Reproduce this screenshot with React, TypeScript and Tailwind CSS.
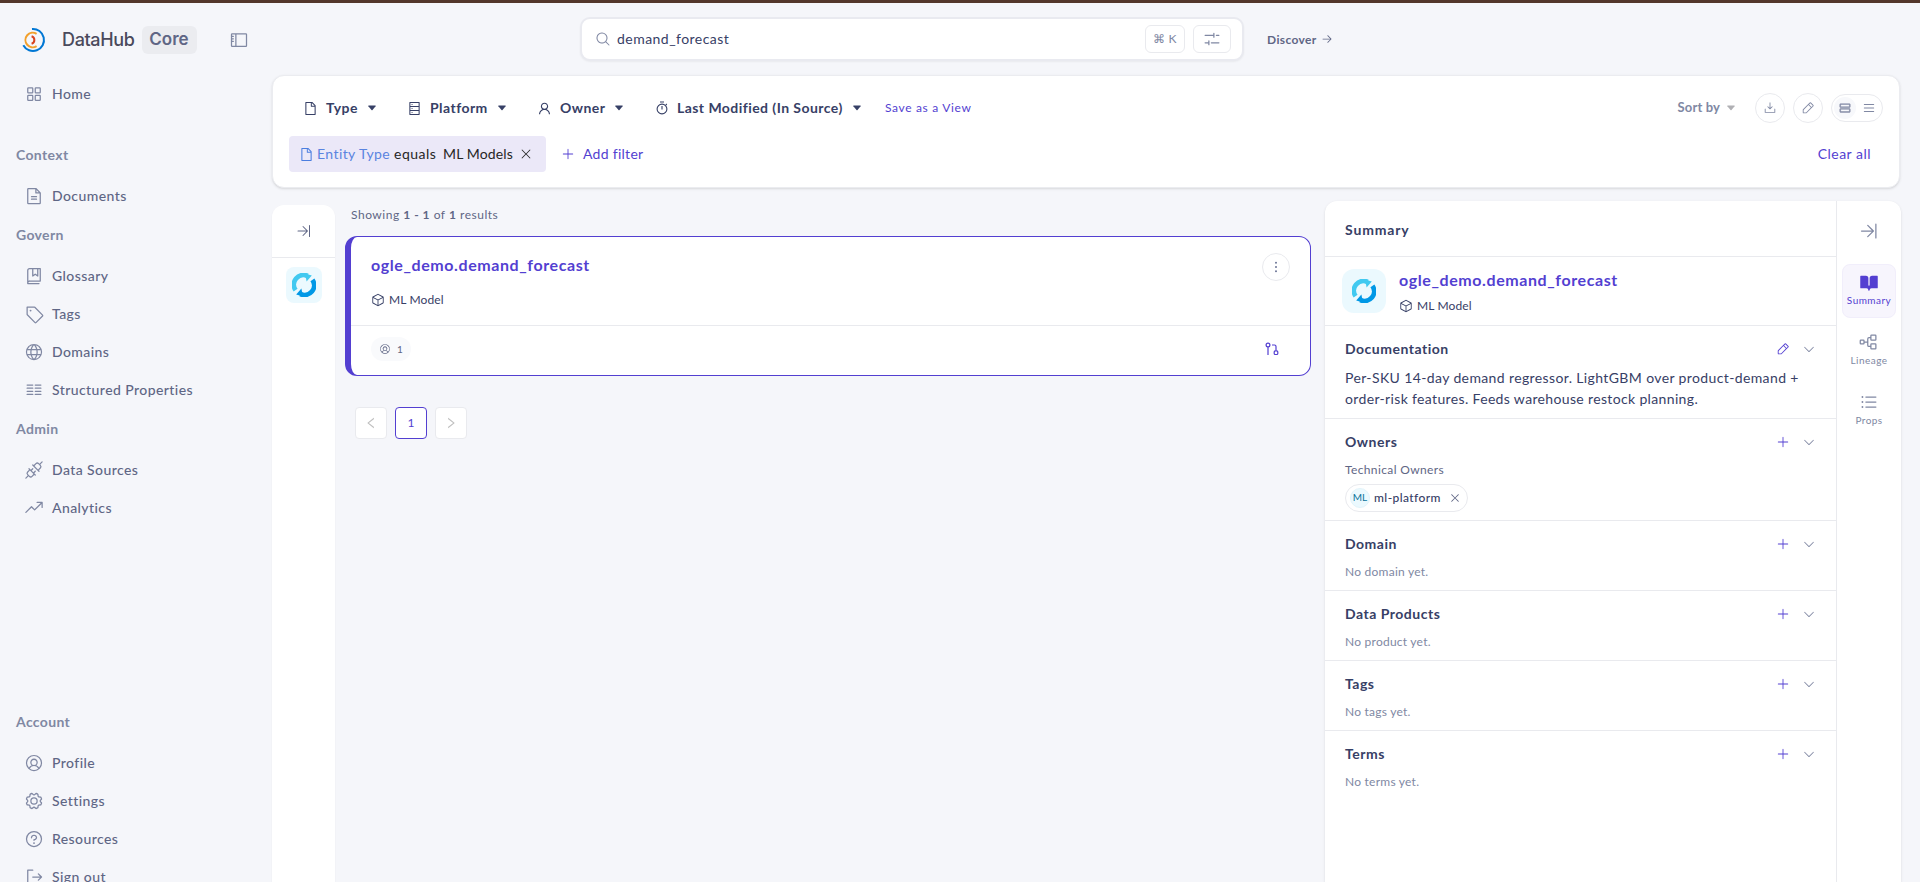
import React from "react";
import {
  PiSquaresFour,
  PiFileText,
  PiBookBookmark,
  PiTag,
  PiGlobe,
  PiTextColumns,
  PiPlugs,
  PiTrendUp,
  PiUserCircle,
  PiGear,
  PiQuestion,
  PiSignOut,
  PiSidebar,
  PiMagnifyingGlass,
  PiFadersHorizontal,
  PiArrowRight,
  PiArrowLineRight,
  PiCube,
  PiDotsThreeVerticalBold,
  PiPlus,
  PiX,
  PiCaretDown,
  PiDownloadSimple,
  PiPencilSimple,
  PiRows,
  PiList,
  PiBookOpenFill,
  PiTreeStructure,
  PiListBullets,
} from "react-icons/pi";
import {
  AiOutlineFile,
  AiOutlineDatabase,
  AiOutlineUser,
  AiOutlineLeft,
  AiOutlineRight,
} from "react-icons/ai";

const navTop = [
  { title: "Context", items: [{ label: "Documents", icon: PiFileText }] },
  {
    title: "Govern",
    items: [
      { label: "Glossary", icon: PiBookBookmark },
      { label: "Tags", icon: PiTag },
      { label: "Domains", icon: PiGlobe },
      { label: "Structured Properties", icon: PiTextColumns },
    ],
  },
  {
    title: "Admin",
    items: [
      { label: "Data Sources", icon: PiPlugs },
      { label: "Analytics", icon: PiTrendUp },
    ],
  },
];

const account = [
  { label: "Profile", icon: PiUserCircle },
  { label: "Settings", icon: PiGear },
  { label: "Resources", icon: PiQuestion },
  { label: "Sign out", icon: PiSignOut },
];

const emptySections = [
  { title: "Domain", text: "No domain yet." },
  { title: "Data Products", text: "No product yet." },
  { title: "Tags", text: "No tags yet." },
  { title: "Terms", text: "No terms yet." },
];

function Logo() {
  return (
    <svg width="24" height="26" viewBox="0 0 24 26" fill="none" strokeWidth="2">
      <path d="M10 2A11 11 0 1 1 1.3 18.2" stroke="#0077d4" />
      <path d="M14.6 6.8A7.3 7.3 0 1 0 14.6 19.2" stroke="#f2a02c" />
      <path d="M9.6 9.2A4 4 0 0 1 9.6 16.8" stroke="#d8431f" />
    </svg>
  );
}

function ModelLogo() {
  return (
    <svg width="24" height="24" viewBox="0 0 24 24" fill="none">
      <path d="M3.6 17.2A9.6 9.6 0 0 1 15.6 3" stroke="#41c9f0" strokeWidth="4.8" />
      <path d="M13 0.4L19.8 2.4L14.6 8.6Z" fill="#41c9f0" />
      <path d="M20.4 6.8A9.6 9.6 0 0 1 8.4 21" stroke="#0098e6" strokeWidth="4.8" />
      <path d="M11 23.6L4.2 21.6L9.4 15.4Z" fill="#0098e6" />
    </svg>
  );
}

function Stopwatch() {
  return (
    <svg width="14" height="14" viewBox="0 0 14 14" fill="none" stroke="#374066" strokeWidth="1.1">
      <circle cx="7" cy="8" r="4.9" />
      <path d="M7 8.4V5M5 1H9M10.8 4L11.8 3" />
    </svg>
  );
}

function LineageMark() {
  return (
    <svg width="14" height="14" viewBox="0 0 14 14" fill="none" stroke="#533fd1" strokeWidth="1.2">
      <circle cx="3" cy="3" r="1.9" />
      <path d="M3 5V13M7 3H9.5Q11 3 11 4.5V8.5" />
      <rect x="9.2" y="8.9" width="3.6" height="3.6" rx="1" />
    </svg>
  );
}

function Caret({ className }) {
  return (
    <svg width="8" height="6" viewBox="0 0 8 6" className={className}>
      <path d="M0.7 0.5H7.3Q8 0.7 7.6 1.3L4.5 5Q4 5.5 3.5 5L0.4 1.3Q0 0.7 0.7 0.5Z" fill="currentColor" />
    </svg>
  );
}

function NavItem({ label, icon: Icon }) {
  return (
    <div className="flex h-[38px] shrink-0 items-center gap-2 pl-6">
      <Icon size={20} className="text-[#8088a3]" />
      <span className="text-sm font-medium tracking-[0.03em] text-[#5f6685]">{label}</span>
    </div>
  );
}

function NavTitle({ children }) {
  return (
    <div className="mb-0.5 flex h-10 items-center pl-4 text-sm font-bold tracking-[0.025em] text-[#8088a3]">
      {children}
    </div>
  );
}

function Sidebar() {
  return (
    <aside className="flex w-[272px] shrink-0 flex-col overflow-hidden">
      <div className="flex h-[72px] shrink-0 items-center pt-0.5">
        <div className="ml-[22px] w-10">
          <Logo />
        </div>
        <span className="font-['Inter'] text-lg font-medium tracking-[-0.02em] text-[#4a4a5c]">DataHub</span>
        <span className="ml-[7px] flex h-7 w-[55px] items-center justify-center rounded-md bg-[#ebecf0] font-['Inter'] text-[17px] font-semibold text-[#5f6685]">
          Core
        </span>
        <PiSidebar size={20} className="ml-[32px] text-[#8088a3]" />
      </div>
      <NavItem label="Home" icon={PiSquaresFour} />
      <div className="h-[22px] shrink-0" />
      {navTop.map((g) => (
        <div key={g.title} className="shrink-0">
          <NavTitle>{g.title}</NavTitle>
          {g.items.map((i) => (
            <NavItem key={i.label} {...i} />
          ))}
        </div>
      ))}
      <div className="mt-[175px] shrink-0">
        <NavTitle>Account</NavTitle>
        {account.map((i) => (
          <NavItem key={i.label} {...i} />
        ))}
      </div>
    </aside>
  );
}

function TopBar() {
  return (
    <div className="flex h-[72px] shrink-0 items-start pt-[14px] pl-[308px]">
      <div className="flex h-11 w-[664px] items-center rounded-[10px] border-2 border-[#e9eaf0] bg-white pl-[13px] shadow-xs">
        <PiMagnifyingGlass size={16} className="text-[#8088a3]" />
        <span className="ml-1.5 flex-1 text-sm tracking-[0.033em] text-[#374066]">demand_forecast</span>
        <span className="flex h-7 w-10 items-center justify-center rounded-md border border-[#e9eaee] text-xs text-[#8088a3]">
          ⌘ K
        </span>
        <span className="mr-[11px] ml-2 flex h-7 w-[38px] items-center justify-center rounded-md border border-[#e9eaee] text-[#8088a3]">
          <PiFadersHorizontal size={20} />
        </span>
      </div>
      <div className="ml-[23px] flex h-11 items-center gap-1 text-xs font-bold text-[#5f6685]">
        <span className="pt-0.5 tracking-[0.03em]">Discover</span>
        <PiArrowRight size={12} />
      </div>
    </div>
  );
}

function FilterMenu({ icon, label, className }) {
  return (
    <div className={"flex items-center text-[#374066] " + className}>
      {icon}
      <span className="ml-2 flex-1 text-sm font-bold tracking-[0.032em] whitespace-nowrap">{label}</span>
      <Caret className="" />
    </div>
  );
}

function Filters() {
  return (
    <div className="mb-px h-[113px] w-[1628px] shrink-0 rounded-xl border border-[#ebecf0] bg-white pr-[15px] pl-4 shadow-sm">
      <div className="mt-3 flex h-10 items-center">
        <FilterMenu icon={<AiOutlineFile size={15} />} label="Type" className="ml-[14px] w-[73px]" />
        <FilterMenu icon={<AiOutlineDatabase size={15} />} label="Platform" className="ml-[31px] w-[99px]" />
        <FilterMenu icon={<AiOutlineUser size={15} />} label="Owner" className="ml-[31px] w-[86px]" />
        <FilterMenu icon={<Stopwatch />} label="Last Modified (In Source)" className="ml-8 w-[206px]" />
        <span className="ml-6 text-xs tracking-[0.055em] text-[#533fd1]">Save as a View</span>
        <span className="ml-auto text-[13px] font-bold tracking-[0.01em] text-[#8088a3]">Sort by</span>
        <Caret className="ml-[7px] text-[#b0b0b4]" />
        <span className="ml-5 flex size-[30px] items-center justify-center rounded-full border border-[#e9eaee] text-[#8088a3]">
          <PiDownloadSimple size={14} />
        </span>
        <span className="ml-2 flex size-[30px] items-center justify-center rounded-full border border-[#e9eaee] text-[#8088a3]">
          <PiPencilSimple size={14} />
        </span>
        <div className="mr-px ml-2 flex h-7 w-[52px] items-center rounded-full border border-[#e9eaee] pl-0.5 text-[#8088a3]">
          <span className="flex size-[22px] items-center justify-center rounded-full bg-[#f7f8fb]">
            <PiRows size={14} strokeWidth={8} stroke="currentColor" />
          </span>
          <span className="flex size-[26px] items-center justify-center">
            <PiList size={14} />
          </span>
        </div>
      </div>
      <div className="mt-2 flex h-9 items-center text-sm">
        <div className="flex h-9 w-[257px] items-center rounded bg-[#ebe8f8] pl-2.5 text-[#262626]">
          <AiOutlineFile size={15} className="text-[#4b7ee0]" />
          <span className="ml-[3px] w-[77px] tracking-[0.03em] whitespace-nowrap text-[#5a84e0]">Entity Type</span>
          <span className="w-[49px] tracking-[0.035em]">equals</span>
          <span className="w-[76px] tracking-[0.01em] whitespace-nowrap">ML Models</span>
          <PiX size={14} />
        </div>
        <PiPlus size={14} className="ml-[15px] text-[#533fd1]" />
        <span className="ml-2 tracking-[0.02em] text-[#533fd1]">Add filter</span>
        <span className="mr-[13px] ml-auto tracking-[0.035em] text-[#533fd1]">Clear all</span>
      </div>
    </div>
  );
}

function Results() {
  return (
    <div className="ml-[10px] w-[966px] shrink-0">
      <div className="mt-[15px] ml-1.5 flex h-[22px] items-center text-xs tracking-[0.043em] text-[#5f6685]">
        <span>
          Showing <b>1 - 1</b> of <b>1</b> results
        </span>
      </div>
      <div className="mt-[10px] h-[140px] rounded-xl border border-l-[6px] border-[#533fd1] bg-white">
        <div className="flex h-[89px] justify-between border-b border-[#e9eaee] pt-[16px] pr-5 pl-5">
          <div>
            <div className="flex h-6 items-center text-base font-bold tracking-[0.037em] text-[#533fd1]">
              ogle_demo.demand_forecast
            </div>
            <div className="mt-[15px] flex h-4 items-center gap-1 text-xs tracking-[0.01em] text-[#374066]">
              <PiCube size={14} />
              ML Model
            </div>
          </div>
          <span className="flex size-7 items-center justify-center rounded-full border border-[#e9eaee] text-[#6c7596]">
            <PiDotsThreeVerticalBold size={16} />
          </span>
        </div>
        <div className="flex items-center justify-between pt-[11px] pr-[31px] pl-5">
          <span className="flex h-6 w-10 items-center rounded-full bg-[#f9fafc] pl-2 text-[10px] text-[#5f6685]">
            <PiUserCircle size={12} />
            <span className="ml-1.5">1</span>
          </span>
          <LineageMark />
        </div>
      </div>
      <div className="mt-[31px] ml-[10px] flex gap-2">
        <span className="flex size-8 items-center justify-center rounded border border-[#e9eaee] bg-white text-[#bfbfbf]">
          <AiOutlineLeft size={14} />
        </span>
        <span className="flex size-8 items-center justify-center rounded border border-[#533fd1] bg-white text-xs text-[#533fd1]">
          1
        </span>
        <span className="flex size-8 items-center justify-center rounded border border-[#e9eaee] bg-white text-[#bfbfbf]">
          <AiOutlineRight size={14} />
        </span>
      </div>
    </div>
  );
}

function SectionHead({ title, edit }) {
  return (
    <div className="flex h-6 items-center pr-5">
      <span className="flex-1 text-sm font-bold tracking-[0.036em] text-[#374066]">{title}</span>
      {edit ? (
        <PiPencilSimple size={14} className="text-[#533fd1]" />
      ) : (
        <PiPlus size={14} className="text-[#533fd1]" />
      )}
      <PiCaretDown size={14} className="ml-3 text-[#8088a3]" />
    </div>
  );
}

function RailTab({ icon: Icon, label, active }) {
  return (
    <div
      className={
        active
          ? "flex h-[54px] w-[54px] flex-col items-center rounded-lg border border-[#f1eefb] bg-[#f7f5fd] pt-[7px] text-[#533fd1]"
          : "flex h-[54px] w-[54px] flex-col items-center border border-transparent pt-[7px] text-[#8088a3]"
      }
    >
      <Icon size={20} />
      <span className="mt-px text-[10px] leading-[15px] tracking-[0.045em]">{label}</span>
    </div>
  );
}

function SummaryPanel() {
  return (
    <div className="mt-[12px] ml-[14px] flex w-[576px] shrink-0 rounded-t-xl bg-white shadow-sm">
      <div className="w-[511px]">
        <div className="flex h-14 items-center border-b border-[#e9eaee] pt-0.5 pl-5 text-sm font-bold tracking-[0.06em] text-[#374066]">
          Summary
        </div>
        <div className="flex h-[69px] items-center border-b border-[#e9eaee] pl-[17px]">
          <span className="flex size-11 items-center justify-center rounded-xl bg-[#ebf9fe]">
            <ModelLogo />
          </span>
          <div className="ml-[13px]">
            <div className="flex h-6 items-center text-base font-bold tracking-[0.037em] text-[#533fd1]">
              ogle_demo.demand_forecast
            </div>
            <div className="mt-1.5 flex h-4 items-center gap-1 text-xs tracking-[0.01em] text-[#374066]">
              <PiCube size={14} />
              ML Model
            </div>
          </div>
        </div>
        <div className="h-[93px] border-b border-[#e9eaee] pt-[11px] pl-5">
          <SectionHead title="Documentation" edit />
          <div className="mt-[6px] text-sm leading-[21px] tracking-[0.027em] whitespace-nowrap text-[#374066]">
            Per-SKU 14-day demand regressor. LightGBM over product-demand +
            <br />
            <span className="tracking-[0.025em]">order-risk features. Feeds warehouse restock planning.</span>
          </div>
        </div>
        <div className="h-[102px] border-b border-[#e9eaee] pt-[11px] pl-5">
          <SectionHead title="Owners" />
          <div className="mt-[7px] h-[18px] text-xs leading-[18px] tracking-[0.031em] text-[#5f6685]">Technical Owners</div>
          <div className="mt-[5px] flex h-7 w-[123px] items-center rounded-full border border-[#e9eaee] pl-1 text-xs">
            <span className="flex size-5 items-center justify-center rounded-full border border-[#e3f4fa] bg-[#ebf9fe] text-[10px] text-[#09739a]">
              ML
            </span>
            <span className="ml-1 flex-1 font-medium tracking-[0.035em] text-[#374066]">ml-platform</span>
            <PiX size={12} className="mr-1.5 text-[#5f6685]" />
          </div>
        </div>
        {emptySections.map((s, i) => (
          <div
            key={s.title}
            className={i < 3 ? "h-[70px] border-b border-[#e9eaee] pt-[11px] pl-5" : "pt-[11px] pl-5"}
          >
            <SectionHead title={s.title} />
            <div className="mt-[7px] text-xs leading-[18px] tracking-[0.02em] text-[#8088a3]">{s.text}</div>
          </div>
        ))}
      </div>
      <div className="flex w-[65px] flex-col items-center gap-1.5 border-l border-[#e9eaee]">
        <PiArrowLineRight size={20} className="mt-5 mb-[17px] shrink-0 text-[#8088a3]" />
        <RailTab icon={PiBookOpenFill} label="Summary" active />
        <RailTab icon={PiTreeStructure} label="Lineage" />
        <RailTab icon={PiListBullets} label="Props" />
      </div>
    </div>
  );
}

export default function App() {
  return (
    <div className="flex h-screen flex-col overflow-hidden bg-[#f5f6fa] font-['Lato',sans-serif]">
      <div className="h-[3px] shrink-0 bg-[#53372b]" />
      <div className="flex min-h-0 flex-1">
        <Sidebar />
        <main className="flex min-w-0 flex-1 flex-col">
          <TopBar />
          <Filters />
          <div className="flex min-h-0 flex-1">
            <div className="mt-4 w-[63px] shrink-0 rounded-t-xl bg-white shadow-xs">
              <div className="flex h-[53px] items-center justify-center border-b border-[#e9eaee]">
                <PiArrowLineRight size={16} className="text-[#5f6685]" />
              </div>
              <div className="mt-[9px] flex justify-center">
                <span className="flex size-9 items-center justify-center rounded-lg bg-[#ebf9fe]">
                  <ModelLogo />
                </span>
              </div>
            </div>
            <Results />
            <SummaryPanel />
          </div>
        </main>
      </div>
    </div>
  );
}
